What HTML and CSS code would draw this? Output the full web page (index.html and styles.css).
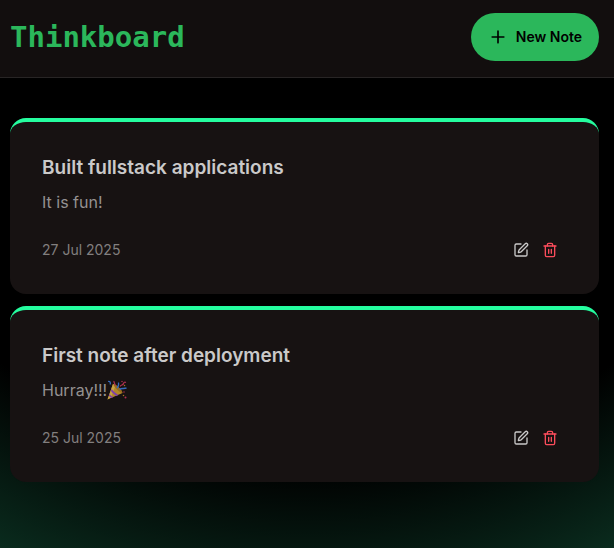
FILE: index.html
```html
<!DOCTYPE html>
<html lang="en">
<head>
<meta charset="utf-8">
<meta name="viewport" content="width=device-width, initial-scale=1">
<title>Thinkboard</title>
<link rel="stylesheet" href="styles.css">
</head>
<body>
<svg class="sprite" aria-hidden="true">
  <symbol id="icon-edit" viewBox="0 0 24 24">
    <path d="M12 3H5a2 2 0 0 0-2 2v14a2 2 0 0 0 2 2h14a2 2 0 0 0 2-2v-7"/>
    <path d="M18.375 2.625a1 1 0 0 1 3 3l-9.013 9.014a2 2 0 0 1-.853.505l-2.873.84a.5.5 0 0 1-.62-.62l.84-2.873a2 2 0 0 1 .506-.852z"/>
  </symbol>
  <symbol id="icon-trash" viewBox="0 0 24 24">
    <path d="M3 6h18"/>
    <path d="M19 6v14c0 1-1 2-2 2H7c-1 0-2-1-2-2V6"/>
    <path d="M8 6V4c0-1 1-2 2-2h4c1 0 2 1 2 2v2"/>
    <path d="M10 11v6M14 11v6"/>
  </symbol>
</svg>
<header class="navbar">
  <h1 class="brand">Thinkboard</h1>
  <a class="new-note" href="#new">
    <svg class="plus" viewBox="0 0 24 24" aria-hidden="true"><path d="M5 12h14M12 5v14"/></svg>
    <span>New Note</span>
  </a>
</header>
<main class="notes">
  <article class="card">
    <h2 class="card-title">Built fullstack applications</h2>
    <p class="card-text">It is fun!</p>
    <footer class="card-footer">
      <time class="date" datetime="2025-07-27">27 Jul 2025</time>
      <div class="actions">
        <a class="action" href="#edit-1" aria-label="Edit note"><svg class="icon"><use href="#icon-edit"/></svg></a>
        <button class="action danger" type="button" aria-label="Delete note"><svg class="icon"><use href="#icon-trash"/></svg></button>
      </div>
    </footer>
  </article>
  <article class="card">
    <h2 class="card-title">First note after deployment</h2>
    <p class="card-text">Hurray!!!<svg class="emoji" viewBox="0 0 40 40" role="img" aria-label="Party popper">
      <path d="M1 39 12 8c8 3 17 12 19 18z" fill="#d9a52f"/>
      <path d="M1 39 12 8l5 3L8 35z" fill="#f3c74f"/>
      <path d="M9 18c3 4 9 9 14 12l-4 2c-5-3-9-7-11-10zM5 28c2 3 5 5 8 6l-4 2-5-4z" fill="#9b4bd2"/>
      <ellipse cx="22" cy="17" rx="3" ry="12" transform="rotate(-45 22 17)" fill="#b98222"/>
      <path d="M20 16c3-3 4-6 3-11M2 3c4-1 6 2 4 6" fill="none" stroke="#3f83e8" stroke-width="2.5"/>
      <path d="M25 19c4-4 8-1 14-3" fill="none" stroke="#3f83e8" stroke-width="3"/>
      <path d="M16 11c1-4-3-5-2-9M26 13c2-4 6-2 7-6 1-3 3-3 5-2" fill="none" stroke="#d43762" stroke-width="2.5"/>
      <g fill="#d43762"><circle cx="30" cy="3" r="1.5"/><circle cx="34" cy="24" r="1.5"/><circle cx="37" cy="35" r="2"/></g>
      <g fill="#c99028"><circle cx="35" cy="11" r="1.5"/><circle cx="33" cy="31" r="1.5"/></g>
    </svg></p>
    <footer class="card-footer">
      <time class="date" datetime="2025-07-25">25 Jul 2025</time>
      <div class="actions">
        <a class="action" href="#edit-2" aria-label="Edit note"><svg class="icon"><use href="#icon-edit"/></svg></a>
        <button class="action danger" type="button" aria-label="Delete note"><svg class="icon"><use href="#icon-trash"/></svg></button>
      </div>
    </footer>
  </article>
</main>
</body>
</html>
```
FILE: styles.css
```css
* {
  box-sizing: border-box;
}

body {
  margin: 0;
  min-height: 100vh;
  color: #cac9c9;
  font-family: Inter, sans-serif;
  font-size: 16px;
  line-height: 24px;
  background: radial-gradient(125% 125% at 50% 10%, #000 60%, #00ff9d40 100%) #171212;
}

h1, h2, p {
  margin: 0;
}

.sprite {
  display: none;
}

.navbar {
  display: flex;
  align-items: center;
  justify-content: space-between;
  padding: 13px 15px 16px 10px;
  border-bottom: 1px solid #282525;
  background: #120e0e;
}

.brand {
  color: #2bb75b;
  font: bold 29px/36px "DejaVu Sans Mono", monospace;
}

.new-note {
  display: flex;
  align-items: center;
  gap: 8px;
  height: 48px;
  padding: 0 17px;
  border-radius: 24px;
  background: #2bb75b;
  color: #000;
  font-size: 14px;
  font-weight: 600;
  text-decoration: none;
}

.plus {
  width: 20px;
  height: 20px;
  fill: none;
  stroke: currentColor;
  stroke-width: 2;
  stroke-linecap: round;
}

.notes {
  display: grid;
  gap: 12px;
  padding: 40px 15px 0 10px;
}

.card {
  padding: 32px;
  border-top: 4px solid #25fd9f;
  border-radius: 16px;
  background: #171212;
}

.card-title {
  font-size: 19px;
  font-weight: 600;
  line-height: 28px;
}

.card-text {
  margin-top: 8px;
  color: #949191;
}

.emoji {
  width: 20px;
  height: 20px;
  vertical-align: -4px;
  opacity: 0.8;
}

.card-footer {
  display: flex;
  align-items: center;
  justify-content: space-between;
  margin-top: 24px;
}

.date {
  color: #827f7f;
  font-size: 14px;
}

.actions {
  display: flex;
  gap: 13px;
  padding-right: 9px;
}

.action {
  display: flex;
  padding: 4px 0;
  border: 0;
  background: none;
  color: #cac9c9;
}

.danger {
  color: #fb4c5b;
}

.icon {
  width: 16px;
  height: 16px;
  fill: none;
  stroke: currentColor;
  stroke-width: 2;
  stroke-linecap: round;
  stroke-linejoin: round;
}
```
